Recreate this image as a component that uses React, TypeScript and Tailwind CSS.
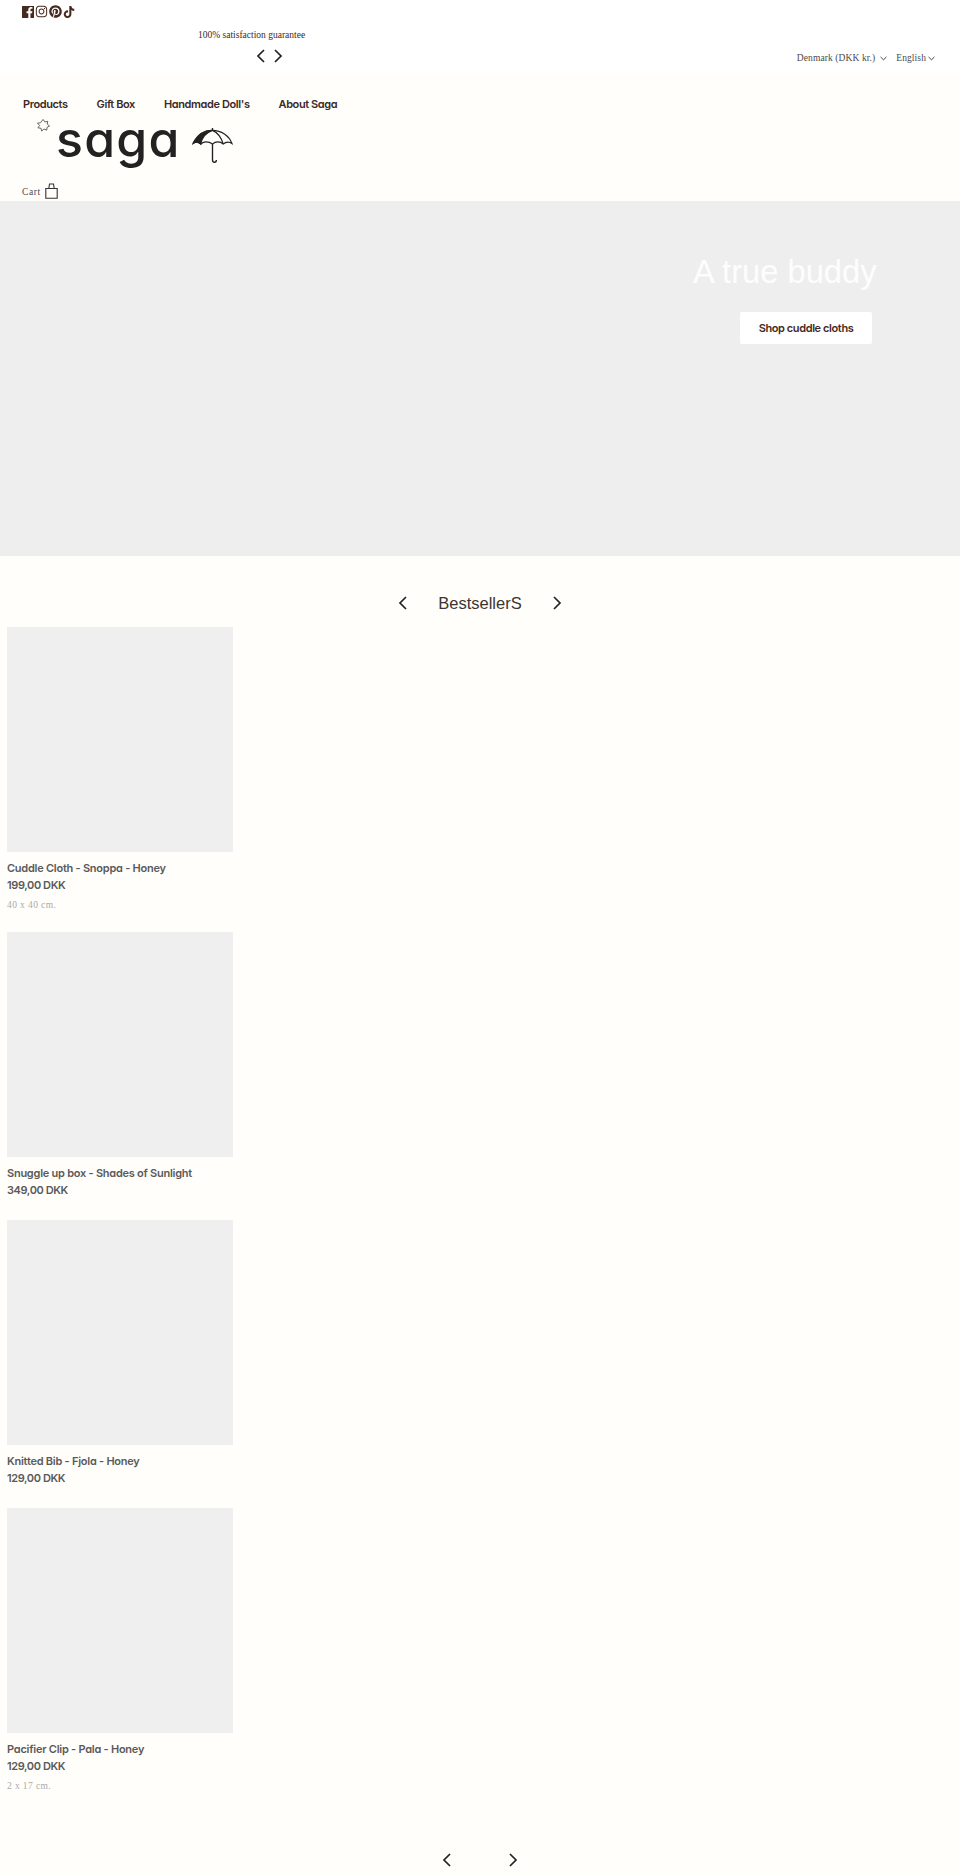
import React from "react";
import { FaInstagram, FaPinterest, FaTiktok, FaFacebookF } from "react-icons/fa";

const serif = "font-['Liberation_Serif',serif]";
const geo = "font-['Inter',sans-serif] font-semibold [font-feature-settings:'cv11'] tracking-[-0.4px]";

function Chev({ dir, className = "" }: { dir: "l" | "r"; className?: string }) {
  return (
    <svg viewBox="0 0 12 16" className={`w-[12px] h-[16px] ${className}`} fill="none" stroke="#222" strokeWidth="1.7">
      <path d={dir === "l" ? "M9 2 L3 8 L9 14" : "M3 2 L9 8 L3 14"} />
    </svg>
  );
}

function Down() {
  return (
    <svg viewBox="0 0 8 5" className="w-[7px] h-[5px]" fill="none" stroke="#3a3a3a" strokeWidth="1.1">
      <path d="M.7.8 4 4 7.3.8" />
    </svg>
  );
}

function Umbrella() {
  return (
    <svg viewBox="0 0 42 38" className="w-[41px] h-[37px]" fill="none" stroke="#222" strokeWidth="1.2">
      <path d="M21 3.500C12 3.500 5 9 1 17c3-2 6-2 8 .5 3-3 8-3 12 0 3-3 8-3 11 0 3-2.500 6-2.500 9-.5C38 9 30 3.500 21 3.500Z" />
      <path d="M21 1v2.500M21 17.500V34c0 3 4 3 4 0" strokeWidth="1.4" />
      <path d="M1 17C5 9 12 3.500 21 3.500C14 6 10 11 9 17.500C6 15 3 15 1 17Z" fill="#222" />
      <path d="M21 3.500C27 6 30 11 32 17.500" />
    </svg>
  );
}

function Sun() {
  return (
    <svg viewBox="0 0 14 14" className="w-[13px] h-[13px]" fill="none" stroke="#333" strokeWidth="0.8">
      <path d="M6.500.5 8.500 3.200 11.500 2.500 11 5.500 13.500 7.500 10.800 9 10.500 12 7.500 10.800 5 13 4.300 10 1 9.500 2.800 7 .5 4.500 3.800 4Z" />
    </svg>
  );
}

function Bag() {
  return (
    <svg viewBox="0 0 13 16" className="w-[13px] h-[16px]" fill="none" stroke="#333" strokeWidth="1.1">
      <path d="M.8 5.500h11.400V15.300H.8ZM3.800 5.500 4.500 1h4l.7 4.500" />
    </svg>
  );
}

const products = [
  { t: "Cuddle Cloth - Snoppa - Honey", p: "199,00 DKK", d: "40 x 40 cm.", h: "h-[305px]" },
  { t: "Snuggle up box - Shades of Sunlight", p: "349,00 DKK", d: "", h: "h-[288px]" },
  { t: "Knitted Bib - Fjola - Honey", p: "129,00 DKK", d: "", h: "h-[288px]" },
  { t: "Pacifier Clip - Pala - Honey", p: "129,00 DKK", d: "2 x 17 cm.", h: "h-[305px]" },
];

export default function App() {
  return (
    <div className="w-[960px] h-[1875px] overflow-hidden bg-[#fffefa] text-[#3b2a26]">
      <div className="h-[72px] bg-white relative">
        <div className="flex pl-[22px] pt-[5px] gap-[1px] text-[#46291f] items-center">
          <span className="w-[12px] h-[12px] bg-[#46291f] flex items-end justify-end overflow-hidden">
            <FaFacebookF className="w-[11px] h-[11px] text-white translate-x-[1px]" />
          </span>
          <FaInstagram className="w-[13px] h-[13px]" />
          <FaPinterest className="w-[13px] h-[13px]" />
          <FaTiktok className="w-[12px] h-[12px]" />
        </div>
        <div className={`pl-[198px] pt-[10px] text-[9.5px] leading-[14px] ${serif}`}>100% satisfaction guarantee</div>
        <div className="flex pl-[255px] pt-[6px] gap-[5px]">
          <Chev dir="l" />
          <Chev dir="r" />
        </div>
        <div className={`absolute right-[25px] top-[51px] flex items-center text-[9.5px] tracking-[0.1px] text-[#4a4a4a] ${serif}`}>
          <span>Denmark (DKK kr.)</span>
          <span className="ml-[5px] mr-[9px]"><Down /></span>
          <span>English</span>
          <span className="ml-[2px]"><Down /></span>
        </div>
      </div>

      <div className="h-[129px] relative">
        <nav className={`flex pl-[23px] pt-[24px] gap-[29px] text-[11px] leading-[16px] text-[#3b2a26] ${geo}`}>
          <span>Products</span>
          <span>Gift Box</span>
          <span>Handmade Doll's</span>
          <span>About Saga</span>
        </nav>
        <div className="absolute left-[37px] top-[47px]"><Sun /></div>
        <div className="absolute left-[56px] top-[37px] text-[50px] leading-[60px] tracking-[1.2px] font-medium text-[#222] font-['Inter',sans-serif] [font-feature-settings:'cv11']">saga</div>
        <div className="absolute left-[192px] top-[55px]"><Umbrella /></div>
        <div className={`absolute left-[22px] top-[111px] flex items-end gap-[4px] text-[9.5px] tracking-[0.6px] text-[#4a4a4a] ${serif}`}>
          <span>Cart</span>
          <Bag />
        </div>
      </div>

      <section className="h-[355px] bg-[#eeeeef] relative">
        <div className="absolute left-[693px] top-[47px] text-[32.7px] leading-[48px] text-[#fdfdfd] font-['Liberation_Sans',sans-serif]">A true buddy</div>
        <div className={`absolute left-[740px] top-[111px] w-[132px] h-[32px] rounded-[2px] bg-white flex items-center justify-center text-[11px] text-[#46291f] ${geo}`}>Shop cuddle cloths</div>
      </section>

      <section>
        <div className="h-[71px] flex items-center justify-center pt-[23px] relative">
          <div className="flex items-center gap-[9px]">
            <Chev dir="l" />
            <h2 className="text-[16.5px] w-[124px] text-center leading-[24px] font-['Liberation_Sans',sans-serif] text-[#3b3533]">BestsellerS</h2>
            <Chev dir="r" />
          </div>
        </div>
        <div className="pl-[7px]">
          {products.map((p) => (
            <article key={p.t} className={p.h}>
              <div className="w-[226px] h-[225px] bg-[#efefef]" />
              <h3 className="mt-[8px] text-[11px] leading-[16px] text-[#5a5a5a] font-['Inter',sans-serif] font-semibold [font-feature-settings:'cv11'] tracking-[-0.25px]">{p.t}</h3>
              <div className={`mt-[1px] text-[11px] leading-[16px] text-[#5a5a5a] ${geo}`}>{p.p}</div>
              {p.d && <div className={`mt-[6px] text-[9.5px] tracking-[0.4px] leading-[12px] text-[#aaa] ${serif}`}>{p.d}</div>}
            </article>
          ))}
        </div>
        <div className="flex justify-center gap-[54px] mt-[39px]">
          <Chev dir="l" />
          <Chev dir="r" />
        </div>
      </section>
    </div>
  );
}
